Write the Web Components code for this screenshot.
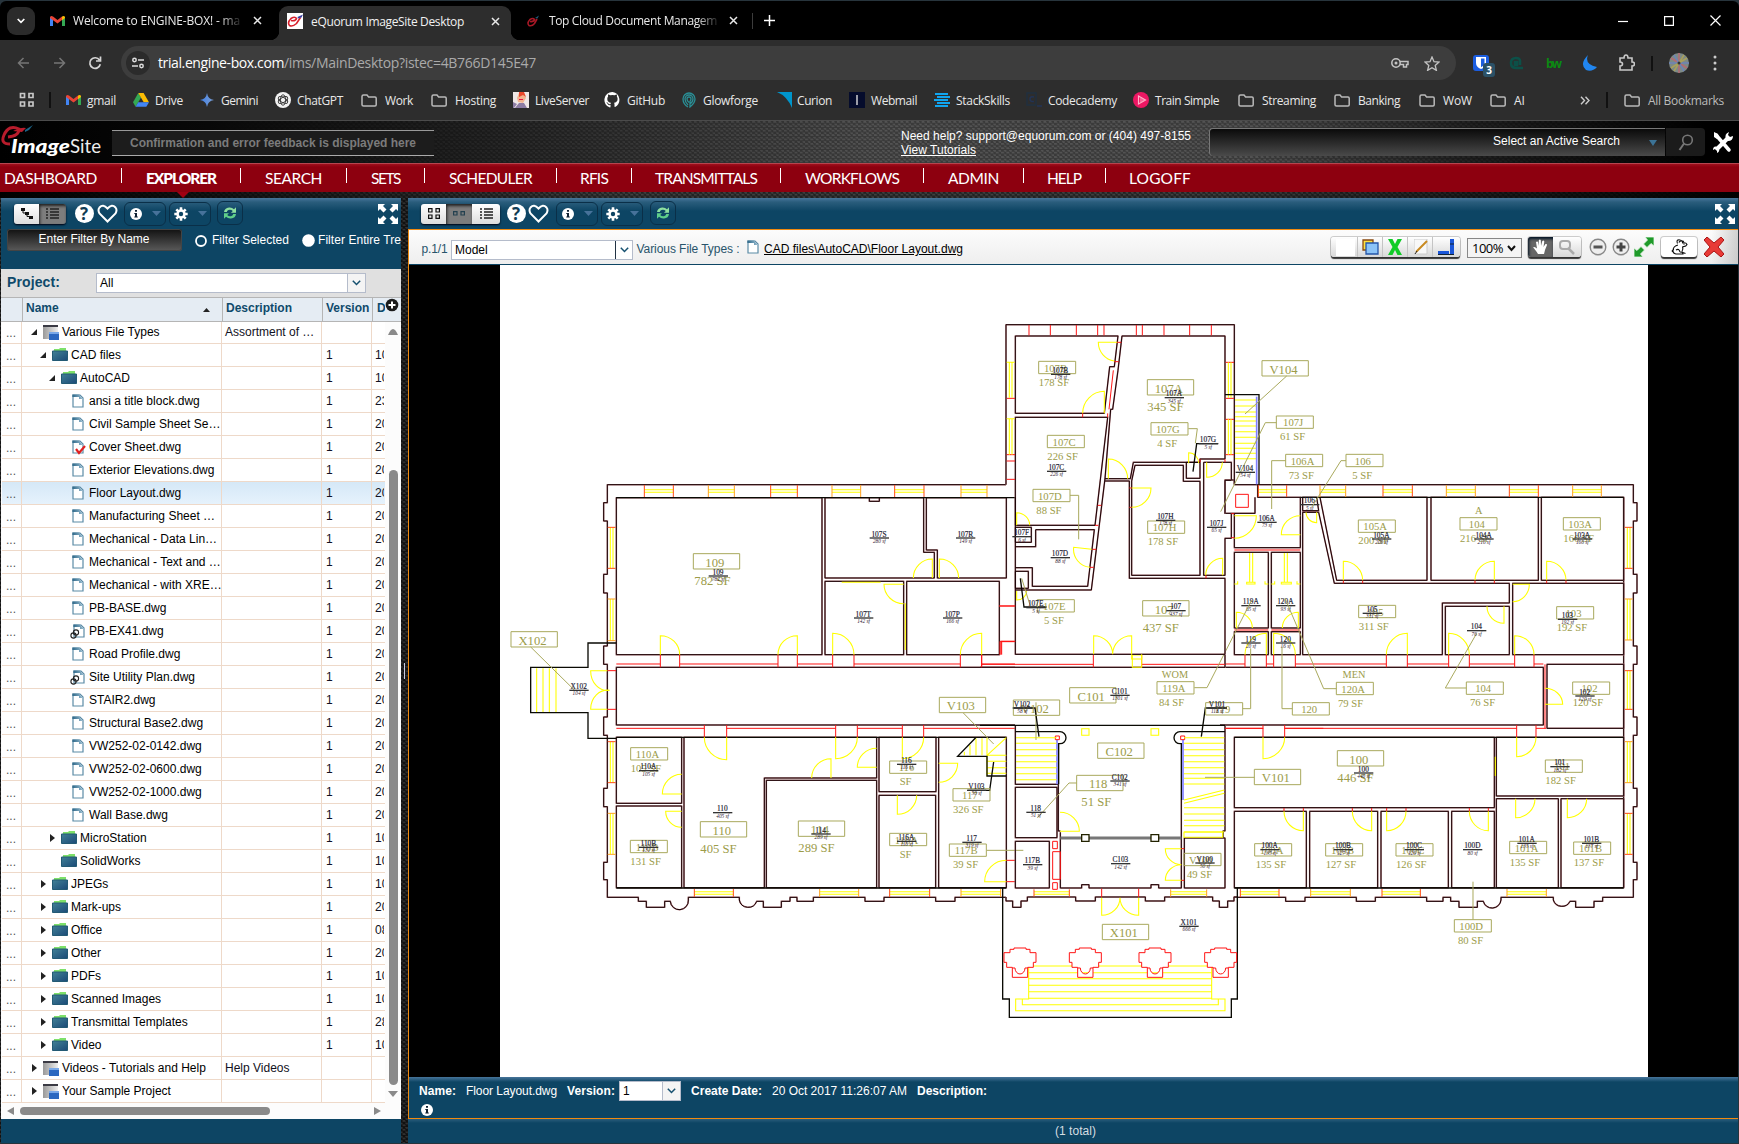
<!DOCTYPE html>
<html lang="en"><head><meta charset="utf-8"><title>eQuorum ImageSite Desktop</title>
<style>
html,body{margin:0;height:100%;background:#1d2b33;overflow:hidden}
body{font:12px "Liberation Sans",Arial,sans-serif}
</style></head><body>
<image-site-window></image-site-window>
<script>
/* Lays children out left to right; each item is [x, width, markup, extra style]. */
const row=(items,start=0)=>{let p=start;return items.map(([x,w,h,s=''])=>{const m=x-p;p=x+w;return `<div style="flex:none;display:flex;align-items:center;justify-content:center;margin-left:${m.toFixed(2)}px;width:${w}px;${s}">${h}</div>`}).join('')};
const fit=(x,w,t,s='')=>[x,w,`<fit-text w="${w}" style="${s}">${t}</fit-text>`];
const svg=(w,h,b,vb)=>`<svg width="${w}" height="${h}" viewBox="${vb||`0 0 ${w} ${h}`}" style="display:block;flex:none">${b}</svg>`;
const def=(n,f)=>customElements.define(n,class extends HTMLElement{connectedCallback(){if(this.shadowRoot)return;this.attachShadow({mode:'open'}).innerHTML=f(this)}});

/* Text tracked so that it fills the width it is given. */
customElements.define('fit-text',class extends HTMLElement{connectedCallback(){
 if(this.shadowRoot)return;
 this.attachShadow({mode:'open'}).innerHTML=`<style>:host{display:block;white-space:pre}span{display:inline-block;text-decoration:inherit}</style><span><slot></slot></span>`;
 const s=this.shadowRoot.querySelector('span'),w=+this.getAttribute('w'),n=this.textContent.length;
 this.style.width=w+'px';
 s.style.letterSpacing=((w-s.getBoundingClientRect().width)/n).toFixed(3)+'px';
}});

const I={
 gmail:svg(15,12,'<path d="M0 11V2h3v9zM3 5" fill="#4285f4"/><path d="M12 11V2h3v9z" fill="#34a853"/><path d="M0 2.500Q.5.300 3 1.500L7.500 5 12 1.500v3.600L7.500 8.600 0 3z" fill="#ea4335"/><path d="M12 1.500Q14.700.300 15 2.500V3l-3 2.300z" fill="#fbbc04"/>'),
 drive:svg(16,14,'<path d="M5.300 0 0 9.300 2.600 13.800 8 4.600z" fill="#34a853"/><path d="M5.300 0h5.300L16 9.300h-5.300z" fill="#fbbc04"/><path d="M5.200 9.300H16l-2.700 4.500H2.600z" fill="#4285f4"/>'),
 gemini:svg(14,14,'<defs><linearGradient id="g"><stop stop-color="#3f7fe8"/><stop offset="1" stop-color="#7c9ed0"/></linearGradient></defs><path d="M7 0Q7.800 6.200 14 7 7.800 7.800 7 14 6.200 7.800 0 7 6.200 6.200 7 0z" fill="url(#g)"/>'),
 gpt:svg(16,16,'<circle cx="8" cy="8" r="8" fill="#f2f2f2"/><g fill="none" stroke="#333" stroke-width=".9"><ellipse cx="8" cy="8" rx="2.500" ry="5.200"/><ellipse cx="8" cy="8" rx="2.500" ry="5.200" transform="rotate(60 8 8)"/><ellipse cx="8" cy="8" rx="2.500" ry="5.200" transform="rotate(120 8 8)"/></g>'),
 folder:svg(16,13,'<path d="M1 2.500Q1 1 2.500 1H6l1.600 2H14q1.200 0 1.200 1.200V10.800Q15.200 12 14 12H2.500Q1 12 1 10.800z" fill="none" stroke="#b9b9b9" stroke-width="1.500"/>'),
 live:svg(16,16,'<path d="M0 0h16v16H0z" fill="#efe7e6"/><path d="M6 1h5l2 5-3 5-5-1-1-4z" fill="#f2b38f"/><path d="M6 0h5l2 5-3-2-4 2z" fill="#e8482c"/><path d="M2 16l4-5h5l3 5zM0 10l4 2-3 4H0z" fill="#8d7da5"/><path d="M6 7h4v1H6z" fill="#e14"/>'),
 github:svg(17,16,'<path d="M8.500 0a8 8 0 0 0-2.600 15.600c.5.1.6-.2.600-.5v-2c-2.300.5-2.800-1-2.800-1-.4-1-1-1.300-1-1.300-.7-.5.1-.5.1-.5.800.1 1.300.9 1.300.9.800 1.300 2 1 2.500.700 0-.5.3-.9.500-1.100-1.900-.2-3.800-.9-3.800-4 0-.9.3-1.700.800-2.200 0-.2-.3-1.100.1-2.200 0 0 .700-.2 2.300.800a8 8 0 0 1 4 0c1.500-1 2.200-.8 2.200-.8.5 1.100.2 2 .1 2.200.5.600.8 1.300.8 2.200 0 3.100-1.900 3.800-3.700 4 .3.300.6.800.6 1.500v2.300c0 .2.1.5.600.4A8 8 0 0 0 8.500 0z" fill="#fff"/>'),
 glow:svg(14,16,'<g fill="none" stroke="#2a8f96" stroke-width="1.300"><path d="M6 15Q1 12 1 7a6 6 0 0 1 12 0Q13 11 8 15V9M8 12q3-2 3-5a4 4 0 0 0-8 0q0 3 3 6M7 10.500Q5 9 5 7a2 2 0 0 1 4 0q0 1.200-1 2"/></g>'),
 curion:svg(15,16,'<path d="M0 0h15v16Q10 4 0 0z" fill="#0095cc"/>'),
 web:svg(16,16,'<path d="M0 0h16v16H0z" fill="#050c2c"/><path d="M7.300 3h1.400v10H7.300z" fill="#ddd"/>'),
 stack:svg(16,14,'<path d="M1 0h13v2H1zM3 3h13v2H3zM0 6h14v2H0zM3 9h13v2H3zM1 12h13v2H1z" fill="#10a5ef"/>'),
 code:svg(17,16,'<path d="M1 1h9v12H1z" fill="none" stroke="#203040" stroke-width="1.400"/><path d="M8 5q-4-1-4 2t4 2.500M11 14h5" stroke="#235" stroke-width="1.500" fill="none"/>'),
 train:svg(16,16,'<circle cx="8" cy="8" r="8" fill="#ec1763"/><path d="M5.500 4v8l7-4z" fill="none" stroke="#ffb0c8" stroke-width="1.200"/><path d="M8 6v4M10 7v2" stroke="#ffb0c8"/>'),
 apps:svg(16,16,'<g fill="none" stroke="#c7c7c7" stroke-width="1.700"><path d="M1.500 1.500h4v4h-4zM10 1.500h4v4h-4zM1.500 10h4v4h-4zM10 10h4v4h-4z"/></g>'),
 x:svg(9,9,'<path d="M1 1l7 7M8 1 1 8" stroke="#e8e8e8" stroke-width="1.500"/>'),
 eq:(bg)=>svg(16,16,bg?'<path d="M0 0h16v16H0z" fill="#fff"/><path d="M4 7.500Q8.500 8.500 9.500 5.500 8 3 4 5.500 0 9.500 2.500 12.500q3 1.500 7-2L13.500 4.500" fill="none" stroke="#d8202c" stroke-width="1.600"/><path d="M10.500 4 16 1.500l-1.500 3-3.500 1z" fill="#3a3fa0"/>':'<path d="M5 8.500Q9 9 9.500 6.500 8 4.500 5 6.500 1.500 10 4 12.500q3 1 5.500-2L12 6" fill="none" stroke="#a81826" stroke-width="1.600"/><path d="M10 5l4-2.500-1.500 3z" fill="#1f5a7a"/>'),
 full:svg(20,20,'<path d="M0 0h7L5 2l3.500 3.500-3 3L2 5 0 7zM20 0h-7l2 2-3.500 3.500 3 3L18 5l2 2zM0 20h7l-2-2 3.500-3.500-3-3L2 15l-2-2zM20 20h-7l2-2-3.500-3.500 3-3L18 15l2-2z" fill="#fff"/>'),
 help:`<b style="display:block;width:19px;height:19px;border-radius:50%;background:#fff;color:#103c54;font:bold 17px/19px 'Open Sans';text-align:center">?</b>`,
 heart:svg(21,19,'<path d="M10.500 17.500 2.500 9.500Q.5 6 2.500 3.500 6-.5 10.500 4.500 15-.5 18.500 3.500q2 2.500 0 6z" fill="none" stroke="#fff" stroke-width="2"/>'),
 info:svg(12,12,'<circle cx="6" cy="6" r="6" fill="#fff"/><path d="M5 2h2v1.800H5zM4.300 5H7v3.600h.8v1H4.300v-1H5V6h-.7z" fill="#123"/>'),
 gear:svg(14,14,'<g stroke="#fff" stroke-width="2.600"><path d="M7 .3v13.400M.3 7h13.400M2.300 2.300l9.400 9.400M11.700 2.300l-9.400 9.400"/></g><circle cx="7" cy="7" r="4.700" fill="#fff"/><circle cx="7" cy="7" r="2.200" fill="#0d4564"/>'),
 down:svg(9,5,'<path d="M0 0h9L4.500 5z" fill="#47729a"/>'),
 refresh:svg(14,14,'<path d="M1 6Q1.500 2 6 1.500q3-.3 5 1.700l2-2v5.500H8L9.800 5Q8 3.300 5.500 4 4 4.600 3.800 6z" fill="#8ee0a0"/><path d="M13 8Q12.500 12 8 12.500q-3 .3-5-1.700l-2 2V7.300h5L4.200 9Q6 10.700 8.500 10 10 9.400 10.200 8z" fill="#5fcf8a"/>'),
 doc:svg(12,14,'<defs><linearGradient id="d" x2="1"><stop stop-color="#2d6788"/><stop offset="1" stop-color="#9cc0d4"/></linearGradient></defs><path d="M1 1h7l3 3v9H1z" fill="#fff" stroke="#5b8ba6" stroke-width="1.200"/><path d="M.4.400H7.500L8 3H.4zM7 1l4 4H7z" fill="url(#d)"/>'),
 chev:svg(9,6,'<path d="M.8.800 4.500 4.500 8.200.8" fill="none" stroke="#15506f" stroke-width="1.500"/>'),
 dir:svg(16,14,'<defs><linearGradient id="f" x2="1" y2="1"><stop stop-color="#418096"/><stop offset="1" stop-color="#1b4a77"/></linearGradient></defs><path d="M2 3V1h5l1-1h6v3z" fill="#7ee06a"/><path d="M.5 3h15v9.500h-15z" fill="url(#f)" stroke="#235a74"/>'),
 proj:svg(16,15,'<defs><linearGradient id="p" x2="1"><stop stop-color="#999"/><stop offset="1" stop-color="#eee"/></linearGradient></defs><path d="M0 0h15v14H0z" fill="url(#p)"/><path d="M0 0h15v2H0z" fill="#3a3a44"/><path d="M6 7h10v8H6z" fill="#2c68c0"/><path d="M6 7h10v2H6z" fill="#79a8e8"/>')
};

def('browser-tabs',()=>`<style>:host{display:flex;height:39px;background:#000;align-items:stretch;font:12px "Open Sans";color:#e8e8e8;border-radius:6px 6px 0 0}
.act{background:#2d2d2d;border-radius:9px 9px 0 0;height:34px;box-sizing:border-box;padding-bottom:4px;margin-top:5px;align-self:flex-start;justify-content:flex-start!important;position:relative}
.act:before,.act:after{content:"";position:absolute;bottom:0;width:9px;height:9px}.act:before{left:-9px;background:radial-gradient(circle at 0 0,#000 9px,#2d2d2d 9.500px)}.act:after{right:-9px;background:radial-gradient(circle at 100% 0,#000 9px,#2d2d2d 9.500px)}
.fade{-webkit-mask:linear-gradient(90deg,#000 88%,rgba(0,0,0,.15))}</style>
${row([[7,28,`<div style="width:28px;height:28px;border-radius:9px;background:#2b2b2b;display:flex;align-items:center;justify-content:center">${svg(8,6,'<path d="M.7 1 4 4.300 7.300 1" fill="none" stroke="#fff" stroke-width="1.700"/>')}</div>`],
[50,15,I.gmail],[73,167,'<fit-text class="fade" w="167">Welcome to ENGINE-BOX! - ma</fit-text>'],[252,10,I.x]])}
<div class="act" style="margin-left:17px;width:232px;display:flex;align-items:center">${row([[8,16,I.eq(1)],fit(32,153,'eQuorum ImageSite Desktop','color:#f1f1f1'),[211,10,I.x]])}</div>
${row([[525,16,I.eq(0)],[549,168,'<fit-text class="fade" w="168">Top Cloud Document Managem</fit-text>'],[728,10,I.x],[752,1,'<i style="width:1px;height:16px;background:#3c3c3c"></i>'],[763,12,svg(11,11,'<path d="M5.500 0v11M0 5.500h11" stroke="#fff" stroke-width="1.500"/>')],
[1617,12,svg(10,10,'<path d="M0 5.500h10" stroke="#fff" stroke-width="1.200"/>')],[1664,10,svg(10,10,'<path d="M.6.600h8.800v8.800H.6z" fill="none" stroke="#fff" stroke-width="1.200"/>')],[1710,11,svg(11,11,'<path d="M.5.500l10 10M10.500.500l-10 10" stroke="#fff" stroke-width="1.200"/>')]],511)}`);

def('browser-toolbar',()=>`<style>:host{display:flex;height:46px;background:#2d2d2d;align-items:center;font:14px "Open Sans";color:#aaa}
.pill{width:1335px;height:34px;border-radius:17px;background:#3d3d3d;display:flex;align-items:center}
.b{position:absolute;left:10px;top:8px;width:12px;height:14px;border-radius:3px;background:#2b5167;color:#fff;font:bold 10px/14px "Open Sans";text-align:center}</style>
${row([[17,13,svg(13,12,'<path d="M12 6H1.500M6.500 1 1.500 6l5 5" fill="none" stroke="#767676" stroke-width="1.500"/>')],[53,13,svg(13,12,'<path d="M1 6h10.500M6.500 1l5 5-5 5" fill="none" stroke="#767676" stroke-width="1.500"/>')],[88,14,svg(14,14,'<path d="M11.500 4A5.300 5.300 0 1 0 12.300 8.300M12.500.500v4.500H8" fill="none" stroke="#d5d5d5" stroke-width="1.700"/>')]])}
<div class="pill" style="margin-left:19px">${row([[5,24,`<div style="width:24px;height:24px;border-radius:12px;background:#2b2b2b;display:flex;align-items:center;justify-content:center">${svg(12,12,'<g fill="none" stroke="#ddd" stroke-width="1.500"><circle cx="2.500" cy="3" r="1.700"/><path d="M6 3h6M0 9h6"/><circle cx="9.500" cy="9" r="1.700"/></g>')}</div>`],fit(37,126,'trial.engine-box.com','color:#fff;margin-top:-2px'),fit(163,252,'/ims/MainDesktop?istec=4B766D145E47','margin-top:-2px'),
[1270,18,svg(18,12,'<g fill="none" stroke="#c4c4c4" stroke-width="1.500"><circle cx="5" cy="6" r="4.200"/><path d="M9 4.500h8v3h-1.500v2.500h-3V7.500H9"/></g><circle cx="5" cy="6" r="1.500" fill="#c4c4c4"/>')],[1303,16,svg(16,15,'<path d="M8 1l2 4.700 5 .4-3.800 3.300 1.200 5L8 11.700 3.600 14.400l1.200-5L1 6.100l5-.4z" fill="none" stroke="#c4c4c4" stroke-width="1.300"/>')]])}</div>
${row([[1474,16,`<div style="position:relative;width:16px;height:16px">${svg(16,16,'<rect width="16" height="16" rx="3" fill="#1b5de0"/><path d="M3 2h10v6q0 4-5 6-5-2-5-6z" fill="#fff"/><path d="M8 3.500h3.500V8Q11.500 10.500 8 12.300z" fill="#1b5de0"/>')}<div class="b">3</div></div>`],
[1509,16,svg(16,14,'<g fill="none" stroke="#0c5048" stroke-width="2.600"><path d="M12 9V5Q12 2 8 2 3 2 3 7t5 5q5 0 7 0M7 6h2v3H7z"/></g>')],fit(1547,14,'bw','color:#0b8a12;font-weight:bold;font-size:12px'),
[1583,15,svg(15,16,'<path d="M6 0Q2 9 15 12 10 17.500 4 15 -3 9 6 0z" fill="#2186f0"/>')],[1619,17,svg(17,18,'<path d="M2 4h4Q6 1 8 1t2 3h4v4q2.500 0 2.500 2T14 12v4H2v-4q2.500 0 2.500-2T2 8z" fill="none" stroke="#c9c9c9" stroke-width="1.600"/>')],[1652,2,'<i style="width:2px;height:15px;background:#111"></i>'],
[1670,20,svg(20,20,'<circle cx="10" cy="10" r="10" fill="#7e8a86"/><g stroke-width="1.500"><path d="M10 0v20M2 5l16 10" stroke="#b46a72"/><path d="M0 10h20M5 2l10 16" stroke="#6d84b8"/><path d="M15 2 5 18M18 5 2 15" stroke="#a9a05a"/></g><circle cx="10" cy="10" r="1.500" fill="#333"/>')],[1714,4,svg(4,16,'<g fill="#ccc"><circle cx="2" cy="2" r="1.500"/><circle cx="2" cy="8" r="1.500"/><circle cx="2" cy="14" r="1.500"/></g>')]],1457)}`);

const marks=[[66,15,'gmail',87,29,'gmail'],[133,16,'drive',155,28,'Drive'],[200,14,'gemini',221,37,'Gemini'],[275,16,'gpt',297,46,'ChatGPT'],[361,16,'folder',385,28,'Work'],[431,16,'folder',455,41,'Hosting'],[513,16,'live',535,54,'LiveServer'],[604,17,'github',627,38,'GitHub'],[682,14,'glow',703,55,'Glowforge'],[777,15,'curion',797,35,'Curion'],[849,16,'web',871,46,'Webmail'],[934,16,'stack',956,54,'StackSkills'],[1026,17,'code',1048,69,'Codecademy'],[1133,16,'train',1155,64,'Train Simple'],[1238,16,'folder',1262,54,'Streaming'],[1334,16,'folder',1358,42,'Banking'],[1419,16,'folder',1443,29,'WoW'],[1490,16,'folder',1514,11,'AI']];
def('bookmark-bar',()=>`<style>:host{display:flex;height:35px;box-sizing:border-box;padding-bottom:6px;background:#2d2d2d;align-items:center;font:12px "Open Sans";color:#e8e8e8;border-bottom:1px solid #4b4b4b}</style>
${row([[19,16,I.apps],[49,2,'<i style="width:2px;height:16px;background:#111"></i>'],...marks.flatMap(m=>[[m[0],m[1],I[m[2]]],fit(m[3],m[4],m[5])]),[1579,11,svg(10,9,'<path d="M1 .700 4.500 4.500 1 8.300M5.500.700 9 4.500 5.500 8.300" fill="none" stroke="#ccc" stroke-width="1.400"/>')],[1606,2,'<i style="width:2px;height:16px;background:#111"></i>'],[1624,16,I.folder],fit(1648,76,'All Bookmarks','color:#bbb')])}`);

const mesh='radial-gradient(ellipse 1.800px 1px at 1.500px 1px,rgba(255,255,255,.13) 90%,transparent),radial-gradient(ellipse 1.800px 1px at 4.200px 3.200px,rgba(255,255,255,.13) 90%,transparent)';
def('app-header',()=>`<style>:host{display:flex;height:42px;align-items:center;color:#fff;background:linear-gradient(90deg,#000 0,#080808 12%,rgba(0,0,0,.5) 30%,transparent 50%,transparent 72%,rgba(0,0,0,.6) 85%,#000 98%),${mesh},#3a3a3a;background-size:auto,5.300px 4.400px,5.300px 4.400px,auto}
.msg{height:24px;border-top:1px solid #999;border-bottom:1px solid #aaa;background:#1c1c1c;width:322px;display:flex;align-items:center}
.help{display:flex;flex-direction:column;line-height:14px;margin-top:2px}.f{height:28px;background:linear-gradient(#0a0a0a,#4a4a4a);border:1px solid #777;border-right:0;border-bottom:0;border-radius:4px 0 0 4px;box-sizing:border-box;display:flex;align-items:center}</style>
${row([[1,100,svg(100,40,'<path d="M7 15Q18 14 18 7 8 2 3 13-1 22 9 22" fill="none" stroke="#b81c2c" stroke-width="3"/><path d="M12 9Q19 5 25 6L21 10z" fill="#b81c2c"/><path d="M24 8l8-5-4 5-4 2z" fill="#1b6488"/><g font-family="Lato" fill="#fff" font-size="19"><text x="10" y="31" font-weight="900" font-style="italic" textLength="59" lengthAdjust="spacingAndGlyphs">Image</text><text x="69" y="31" fill="#eee" textLength="31" lengthAdjust="spacingAndGlyphs">Site</text></g>')],
[112,322,`<div class="msg" style="margin-top:2px">${row([fit(18,286,'Confirmation and error feedback is displayed here','color:#7b7b7b;font-weight:bold')])}</div>`],
[901,290,`<div class="help"><fit-text w="290">Need help? support@equorum.com or (404) 497-8155</fit-text><fit-text w="75" style="text-decoration:underline">View Tutorials</fit-text></div>`],
[1209,456,`<div class="f" style="width:456px">${row([fit(283,127,'Select an Active Search','margin-top:-4px'),[438,10,svg(8,6,'<path d="M0 0h8L4 6z" fill="#3c7396"/>')]])}</div>`],
[1666,39,`<div style="width:39px;height:28px;background:#1b1b1b;border-radius:0 4px 4px 0;display:flex;align-items:center;justify-content:center">${svg(16,17,'<circle cx="9.500" cy="6" r="4.800" fill="none" stroke="#777" stroke-width="1.600"/><path d="M6 9.500 1.500 16" stroke="#777" stroke-width="2"/>')}</div>`],
[1713,20,svg(20,21,'<path d="M3 3l13 15" stroke="#fff" stroke-width="3.500" stroke-linecap="round"/><path d="M3 18 15 6" stroke="#fff" stroke-width="4"/><path d="M13 7q-2-5 3-7l-1 3 2 2 3-1q0 5-5 5zM5 15q3 4-1 6l0-3-2-1-2 1q0-5 5-3z" fill="#fff"/><path d="M1 0l4 2 1 3-2 2-3-2z" fill="#fff"/>')]])}`);

const nav=[[4,93,'DASHBOARD'],[146,70,'EXPLORER'],[265,57,'SEARCH'],[371,29,'SETS'],[449,83,'SCHEDULER'],[580,28,'RFIS'],[655,102,'TRANSMITTALS'],[805,94,'WORKFLOWS'],[948,51,'ADMIN'],[1047,34,'HELP'],[1129,62,'LOGOFF']],seps=[121,240,346,424,556,631,780,923,1023,1105];
def('app-nav',()=>`<style>:host{display:block;height:35px;background:linear-gradient(90deg,#000,transparent 35%,transparent 70%,#000),${mesh},#222;background-size:auto,5.300px 4.400px,5.300px 4.400px,auto}
nav{height:29px;box-sizing:border-box;padding-bottom:1px;border-top:1px solid #b5454f;background:linear-gradient(#a0101d,#8d000f 3px);display:flex;align-items:center;color:#fff;font:15.500px Lato}i{width:1px;height:15px;background:#fff;margin-top:-4px}</style>
<nav>${row(nav.flatMap((n,k)=>[fit(n[0],n[1],n[2],k==1?'font-weight:900':''),...(seps[k]?[[seps[k],1,'<i></i>']]:[])]))}</nav><div style="display:flex">${row([[177,12,svg(12,6,'<path d="M0 0h12L6 6z" fill="#a00012"/>')]])}</div>`);

const btn=(w,h)=>`<div style="width:${w}px;height:24px;box-sizing:border-box;border:1.500px solid #0a2f48;border-radius:6px;display:flex;align-items:center;justify-content:center;gap:10px">${h}</div>`;
const drop=(i,w)=>btn(w,i+I.down);
const panelTop='linear-gradient(#47759a 0,#2a5d7c 4px,#0d4564 13px)';
const list=svg(13,11,'<path d="M4 1h9M4 4h9M4 7h9M4 10h9M0 1h2M0 4h2M0 7h2M0 10h2" stroke="#222" stroke-width="1.300"/>');
const seg=(parts)=>`<div style="display:flex;height:20px;border-radius:3px;overflow:hidden;box-shadow:0 1px 2px #001">${parts.map(([w,h,on])=>`<div style="width:${w}px;display:flex;align-items:center;justify-content:center;background:${on?'#7d7d7d;box-shadow:inset 1px 2px 3px #222':'linear-gradient(#fff,#ddd)'}">${h}</div>`).join('')}</div>`;

const rows=[[0,'v','p','Various File Types','','','Assortment of …'],[1,'v','f','CAD files',1,10],[2,'v','f','AutoCAD',1,10],...['ansi a title block.dwg|23','Civil Sample Sheet Se…|20','Cover Sheet.dwg|20|c','Exterior Elevations.dwg|20','Floor Layout.dwg|20','Manufacturing Sheet …|20','Mechanical - Data Lin…|20','Mechanical - Text and …|20','Mechanical - with XRE…|20','PB-BASE.dwg|20','PB-EX41.dwg|20|l','Road Profile.dwg|20','Site Utility Plan.dwg|20|l','STAIR2.dwg|20','Structural Base2.dwg|20','VW252-02-0142.dwg|20','VW252-02-0600.dwg|20','VW252-02-1000.dwg|20','Wall Base.dwg|20'].map(s=>{s=s.split('|');return [3,'',s[2]||'d',s[0],1,s[1]]}),[2,'>','f','MicroStation',1,10],[2,'','f','SolidWorks',1,10],...['JPEGs|10','Mark-ups|20','Office|08','Other|20','PDFs|10','Scanned Images|10','Transmittal Templates|28','Video|10'].map(s=>[1,'>','f',...s.split('|').flatMap((v,i)=>i?[1,v]:[v])]),[0,'>','p','Videos - Tutorials and Help','','','Help Videos'],[0,'>','p','Your Sample Project','','']];
def('tree-row',e=>{const r=rows[+e.getAttribute('n')],k=r[2],ic=k=='p'?I.proj:k=='f'?I.dir:k=='c'?svg(14,15,I.doc+'<path d="M4 9l3 4 6-7" fill="none" stroke="#e02020" stroke-width="2.200"/>'):k=='l'?svg(15,15,`<g transform="translate(3)">${I.doc}</g><g fill="none" stroke="#222" stroke-width="1.100"><circle cx="3.500" cy="11.500" r="2.600"/><circle cx="6" cy="8.500" r="2.600"/></g>`):I.doc;
const ar=r[1]=='v'?svg(6,6,'<path d="M6 0v6H0z" fill="#222"/>'):r[1]=='>'?svg(5,8,'<path d="M0 0v8l5-4z" fill="#222"/>'):'';
const L=r[0]==3?72:[43,52,61][r[0]];
return `<style>:host{display:flex;height:23px;box-sizing:border-box;border-bottom:1px solid #eed9c9;color:#000;background:${r[3].startsWith('Floor')?'linear-gradient(#d5e8f7,#e6f2fc)':'#fff'}}
div.c{box-sizing:border-box;border-right:1px solid #eed9c9;overflow:hidden;white-space:nowrap;line-height:22px;padding-left:4px;flex:none;color:#112}</style>
<div class="c" style="width:20px;line-height:24px;color:#555">...</div><div class="c" style="width:200px;display:flex;align-items:center;padding:0;color:#000">${row([[L-12,6,ar],k=='l'?[70,15,ic]:r[0]==3?[72,k=='c'?14:12,ic]:[L,16,ic]],22)}<span style="margin-left:${k=='l'?4:k=='c'?3:r[0]==3?5:3}px">${r[3]}</span></div>
<div class="c" style="width:100px;padding-left:3px">${r[6]||''}</div><div class="c" style="width:50px">${r[4]||''}</div><div class="c" style="width:12px;border-right:0;padding-left:3px">${r[5]||''}</div>`});

def('tree-panel',()=>`<style>:host{display:flex;flex-direction:column;width:400px;background:#0d4564;color:#fff;overflow:hidden}
.t{height:31px;background:${panelTop};display:flex;align-items:center;flex:none}.fl{height:40px;display:flex;align-items:flex-start;flex:none}
.in{width:175px;height:22px;border-radius:3px;background:linear-gradient(#111,#5a5a5a);box-shadow:0 0 0 1px #444 inset;text-align:center;line-height:21px}
.pr{height:28px;background:#e0e0e0;display:flex;align-items:center;color:#0f4a6b;flex:none}
.cb{border:1px solid #b5bccb;background:#fff;color:#000;display:flex;align-items:center;justify-content:space-between;padding-left:3px;box-sizing:border-box;height:20px}
.h{height:25px;display:flex;background:#e5ecf3;border-top:1px solid #b5b5b5;border-bottom:1px solid #b5b5b5;box-sizing:border-box;color:#0f4a6b;font-weight:bold;flex:none;padding-left:1px}
.h div{box-sizing:border-box;border-right:1px solid #b5b5b5;padding-left:4px;line-height:20px;flex:none}
.b{display:flex;height:781px;background:#fcfcfc;flex:none;padding-left:1px}.rows{width:383px;overflow:hidden;display:flex;flex-direction:column}.rows tree-row:first-child{margin-top:-1px}
.sb{width:16px;display:flex;flex-direction:column;align-items:center;flex:none}.hs{height:16px;background:#fcfcfc;display:flex;align-items:center;flex:none}</style>
<div class="t">${row([[14,52,seg([[25,svg(12,12,'<path d="M2 2v3h4v3.500h4" fill="none" stroke="#111"/><path d="M0 0h4v3H0zM4 4h4v3H4zM8 8h4v3H8z" fill="#111"/>')],[27,list,1]])],[74,20,I.help],[97,21,I.heart],[124,42,drop(I.info,42)],[169,42,drop(I.gear,42)],[217,26,btn(26,I.refresh),'margin-top:-1px'],[378,20,I.full]],1)}</div>
<div class="fl">${row([[6,176,'<div class="in"><fit-text w="111" style="display:inline-block">Enter Filter By Name</fit-text></div>'],[195,12,svg(12,12,'<circle cx="6" cy="6" r="5" fill="#0d4564" stroke="#fff" stroke-width="1.800"/>'),'height:23px'],[212,77,'<fit-text w="77">Filter Selected</fit-text>','height:22px'],[302,13,svg(13,13,'<circle cx="6.500" cy="6.500" r="6.300" fill="#fff"/>'),'height:23px'],[318,83,'<fit-text w="83">Filter Entire Tre</fit-text>','height:22px']],1)}</div>
<div class="pr">${row([[7,53,'<fit-text w="53" style="font:bold 14px Liberation Sans;margin-top:-3px">Project:</fit-text>'],[96,270,`<div class="cb" style="width:270px"><span>All</span><div style="width:17px;height:18px;border-left:1px solid #b5bccb;background:#f4f4f4;display:flex;align-items:center;justify-content:center">${I.chev}</div></div>`]],1)}</div>
<div class="h"><div style="width:21px"></div><div style="width:200px;display:flex;justify-content:space-between;padding:0 12px 0 3px"><span>Name</span>${svg(7,4,'<path d="M0 4h7L3.500 0z" fill="#222"/>').replace('display:block','display:block;margin-top:10px')}</div><div style="width:100px;padding-left:3px">Description</div><div style="width:50px;padding-left:3px">Version</div><div style="border:0;width:27px;display:flex;padding-left:4px"><span style="width:8px;overflow:hidden">D</span>${svg(14,14,'<circle cx="7" cy="7" r="6.300" fill="#1b1b1b"/><path d="M7 3.500v7M3.500 7h7" stroke="#fff" stroke-width="2"/>')}</div></div>
<div class="b"><div class="rows">${rows.map((_,i)=>`<tree-row n="${i}"></tree-row>`).join('')}</div><div class="sb">${svg(10,7,'<path d="M0 7Q5-5 10 7z" fill="#8a8a8a"/>').replace('display:block','display:block;margin-top:6px')}<i style="margin-top:135px;width:9px;height:615px;border-radius:5px;background:#8a8a8a;flex:none"></i>${svg(10,6,'<path d="M0 0h10L5 6z" fill="#8a8a8a"/>').replace('display:block','display:block;margin-top:6px')}</div></div>
<div class="hs">${row([[6,8,svg(7,8,'<path d="M7 0v8L0 4z" fill="#8a8a8a"/>')],[20,250,'<i style="width:250px;height:8px;border-radius:4px;background:#8a8a8a"></i>'],[373,8,svg(7,8,'<path d="M0 0v8l7-4z" fill="#8a8a8a"/>')]],1)}</div>`);

/* Floor plan: each quadrant is drawn in third-pixel units from its own origin. */
const P=(d,c,w=3,f='none')=>`<path d="${d}" fill="${f}" stroke="${c}" stroke-width="${w}"/>`;
const W=d=>P(d,'#b07a7e',4.600)+P(d,'#180003',3),K=d=>P(d,'#0a0a04',4),R=d=>P(d,'#ff1414'),Y=d=>P(d,'#ffff00',3.200),O=d=>P(d,'#a9a95c',3),BL=d=>P(d,'#8080ff',5),GR=d=>P(d,'#777',9);
const rc=a=>a.map(([x,y,X,Z])=>`M${x} ${y}H${X}V${Z}H${x}Z`).join('');
const D=a=>Y(a.map(([h,k,a1,b1,a2,b2])=>{const rx=Math.max(Math.abs(a1-h),Math.abs(a2-h)),ry=Math.max(Math.abs(b1-k),Math.abs(b2-k)),s=(a1-h)*(b2-k)-(b1-k)*(a2-h)>0?1:0;return `M${h} ${k}L${a1} ${b1}A${rx} ${ry} 0 0 ${s} ${a2} ${b2}`}).join(''));
const WH=(a,y,Z)=>a.map(([x,X],i)=>Y(`M${x} ${(y+Z)/2-4}H${X}M${x} ${(y+Z)/2+4}H${X}`)+P(`M${x} ${y}V${Z}M${X} ${y}V${Z}`,i%2?'#ffa020':'#ff4a14')).join('');
const WV=(a,x,X)=>a.map(([y,Z],i)=>Y(`M${(x+X)/2-4} ${y}V${Z}M${(x+X)/2+4} ${y}V${Z}`)+P(`M${x} ${y}H${X}M${x} ${Z}H${X}`,i%2?'#ffa020':'#ff4a14')).join('');
const tx=(x,y,t,s,a='start')=>`<text x="${x}" y="${y}" font-size="${s}" text-anchor="${a}" fill="#9c9c4a">${t}</text>`;
const lab=(w,h,s,d)=>a=>a.map(([x,y,t,sf,sx])=>O(`M${x} ${y}h${w}v${h}h${-w}z`)+tx(x+w/2-5,y+h-(s>35?7:6),t,s,'middle')+(sf?tx(sx||x,y+d,sf,s):'')).join('');
const BG=lab(139,46,38,93),SM=lab(111,37,32,73);
const MI=a=>a.map(([x,y,t,s])=>`<text x="${x-1}" y="${y-4}" font-size="22" text-anchor="middle" fill="#222233" stroke="#223" stroke-width=".5">${t}</text><text x="${x}" y="${y+15}" font-size="16" font-style="italic" text-anchor="middle" fill="#332233">${s}</text>`+P(`M${x-29} ${y}h58`,'#333',4)).join('');
const vs=(xs,y,Z)=>xs.map(x=>`M${x} ${y}V${Z}`).join(''),hs=(ys,x,X)=>ys.map(y=>`M${x} ${y}H${X}`).join(''),sg=(a,y)=>a.map(([x,X])=>`M${x} ${y}H${X}`).join('');
const sec=(x,y,h)=>`<g transform="translate(${x-500} ${y-265}) scale(.33333)">${h}</g>`;
const secB=[
 W('M1518 44H322V98H311V153H322V313H311V369H322V528H311V583H322V741H311V796H322V955H311V1010H322V1177H311V1229H322V1282H415V1294H439V1312H494V1294H511A27 27 0 0 0 565 1290V1282H718V1290A27 27 0 0 0 770 1294H790V1312H844V1294H870V1282H891V1294H940V1282H1095V1294H1152V1282H1307V1294H1365V1282H1518'),
 W(rc([[349,83,966,554],[975,334,1211,554],[1220,334,1498,554],[349,802,545,1000],[349,1008,545,1253],[799,931,1130,1253],[1137,802,1308,965],[1137,976,1307,1253],[1316,802,1519,1253]])+'M975 83H1271V247H1303V324H975ZM1108 83V94H1138V83M1279 83H1519V324H1312V240H1279ZM1545 592H349V765H1545M552 802H1130V924H793V1253H552Z'),
 K('M349 519H264V592H92V728H264V805H349'),K('M349 802H1519M349 83H1545M349 1254H1519'),
 R(sg([[349,481],[539,834],[892,998],[1062,1381],[1445,1545]],582)+sg([[349,613],[680,1007],[1072,1207],[1271,1545]],775)+vs([481,539,834,892,998,1062,1381,1445],554,592)+vs([613,680,1007,1072,1207,1271],765,802)+'M1498 408H1545M1545 515H1505V554M1519 1171H1545M1519 1235H1545M322 602H348M322 718H348'),
 WH([[433,520],[625,703],[812,892],[996,1082],[1184,1272],[1383,1461]],45,81),WV([[172,295],[387,512],[815,938],[1030,1153]],323,347),WH([[583,700],[959,1076],[1169,1289],[1383,1502]],1257,1281),
 D([[481,554,481,497,539,554],[892,554,892,497,834,554],[998,554,998,490,1062,554],[1445,554,1445,490,1381,554],[1297,324,1297,267,1240,324],[1318,324,1318,267,1376,324],[1211,343,1152,343,1211,401],[680,802,680,869,613,802],[1007,802,1007,866,1072,802],[1207,802,1207,866,1271,802],[1130,892,1072,892,1130,835],[993,924,993,866,935,924],[545,972,487,972,545,913],[545,1024,497,1024,545,1072],[1316,880,1373,880,1316,937],[1192,976,1192,1033,1250,976],[1519,1235,1454,1235,1519,1171],[322,602,272,602,329,661],[322,718,272,718,329,661]]),
 Y(vs([110,129,148,168],595,726)+'M1025 337H1142M1216 400V540M1393 845V856M1410 825V856M1428 805V856M1446 805V856M1461 803V918M1461 856L1519 803'+hs([856,874,893,910],1461,1519)),
 K('M1427 803L1373 859H1461V918H1519M1481 876L1469 961H1403'),O('M92 531L224 661M1390 729L1481 822M1460 1141H1570'),
 BG([[580,251,109,'782 SF',583],[33,485,'X102'],[1318,682,'V103'],[601,1055,110,'405 SF'],[895,1053,114,'289 SF']]),SM([[392,833,'110A','105 SF'],[391,1111,'110B','131 SF'],[1169,873,116,'SF',1199],[1169,1090,'116A','SF',1199],[1359,956,117,'326 SF'],[1348,1122,'117B','39 SF',1359]]),
 MI([[655,318,109,'782 sf'],[1138,204,'107S','280 sf'],[1397,204,'107R','149 sf'],[1091,444,'107T','142 sf'],[1358,444,'107P','166 sf'],[237,661,'X102','104 sf'],[446,902,'110A','105 sf'],[446,1132,'110B','131 sf'],[668,1028,110,'405 sf'],[963,1092,114,'289 sf'],[1220,883,116,'116 sf'],[1220,1114,'116A','116 sf'],[1430,961,'V103','50 sf'],[1416,1117,117,'319 sf']])].join('');
const secA=[
 W('M138 524V44H823V523M166 78H474L463 170H449L433 310H166ZM795 447V78H486L474 181L458 298H452L435 506H511L520 457H720V447H795M166 322H443L405 646H166ZM435 506L394 840H166V1033H795V805H508V513H435M227 659H403L383 829H217V773H166M166 710H227V659M515 513L525 466H670V514H720V796H515V513M731 457V796H795V685H814V611M795 611V511H814V457H731'+rc([[166,652,214,697],[166,784,205,835],[679,457,720,505]])+'M166 562V840'),
 R(vs([207,271,349,413,432,529,547,612,689,754],45,76)+hs([265,434,453,508],140,165)+hs([157,265,328,434],797,822)+'M118 888H166M166 994H123V1033M460 181L447 298M368 310V322M443 310V322M470 97H484M463 155H476M405 646H415M398 718H409M390 772H401M413 586H424M720 447V457M795 447V457M738 796V805M508 534H515M508 592H515M814 611H823M814 683H823'),
 Y('M148 157V263M156 157V263M148 326V434M156 326V434M805 157V263M813 157V263M805 326V434M813 326V434M140 157H164M140 326H164'+hs([270,288,306,320,333,348,365,382,400,415,430,446],825,888)+'M515 1033V1047H545V1033'),
 BL('M890 260V523'),K('M795 254H897V523'),
 D([[472,97,415,97,463,153],[433,310,433,244,368,310],[445,506,445,447,503,506],[515,534,573,534,515,592],[686,460,686,428,716,460],[740,457,740,502,787,457],[788,796,788,745,737,796],[170,646,170,608,209,646],[395,718,341,712,390,772],[170,843,170,870,200,843],[401,1033,401,977,458,1033],[515,1033,515,977,458,1033]]),
 O('M980 198L855 312M949 338H916L782 605M977 452H935V597M1158 452H1143L1055 592M685 356H712L706 400M330 556H356V688M185 805L210 885'),K('M775 401H710L699 485M181 805L192 891H260'),
 BG([[562,209,'107A','345 SF'],[548,872,107,'437 SF'],[906,152,'V104']]),SM([[236,154,'107B','178 SF'],[573,338,'107G','4 SF',592],[262,376,'107C','226 SF'],[219,538,'107D','88 SF',229],[563,633,'107H','178 SF'],[232,869,'107E','5 SF',252],[949,318,'107J','61 SF',960],[977,433,'106A','73 SF',986],[1158,433,106,'5 SF',1177]]),
 MI([[302,193,'107B','178 sf'],[643,263,'107A','345 sf'],[745,401,'107G','5 sf'],[290,484,'107C','226 sf'],[617,631,'107H','178 sf'],[770,652,'107J','65 sf'],[856,487,'V104','54 sf'],[186,680,'107F','6 sf'],[301,743,'107D','88 sf'],[228,893,'107E','5 sf'],[648,902,107,'437 sf']])].join('');
const col=c=>`M${c-30} 928H${c-18}V924H${c+18}V928H${c+30}V938H${c+48}V967H${c+40}V982H${c+23}V1012H${c-23}V982H${c-40}V967H${c-48}V938H${c-30}ZM${c-23} 984H${c-15}A15 18 0 0 0 ${c+15} 984H${c+23}`;
const secC=[
 W('M0 82H735V45M106 256V433H235M106 744H208V604H106ZM106 593H231V442H106ZM735 256V573H729V593M613 594H735V744H613ZM241 577V744H305V734H327V744H513V734H536V744H604V480M235 433V573H241M78 771V783H98V802H123V783H142V771H287V783H346V771H496V783H554V771H698V783H718V802H743V783H762V771H772'),
 K('M0 256H735M106 275H240A18 18 0 0 1 240 311H236V433M735 275H600A18 18 0 0 0 600 311H604V480'),GR('M241 594H604'),
 P(rc([[305,584,327,604],[513,584,536,604]]),'#222200',4,'#fff'),BL('M231 300V433M609 300V480'),
 R(sg([[5,340],[485,735]],73)+vs([5,340,485],45,82)+'M60 45V4H106'+sg([[735,850],[914,1030]],265)+'M365 746V771M476 746V771M604 626H613M604 721H613'+rc([[226,288,238,299],[602,288,614,299],[218,604,232,626],[218,635,241,718],[218,728,232,748]])),
 Y(rc([[305,266,327,286],[513,266,536,286],[457,45,485,82],[612,577,728,592]])+hs([293,310,329,347,365,383,401,419],108,230)+hs([293,310,329,347,365,383,401,415,432,503,522,541,557,575],612,733)+'M612 480L733 450M612 490L733 460M146 978V1077H107V1112H735V1077H695V978M127 1077V1094H715V1077'+hs([978,998,1016,1036,1055,1075],146,695)),
 WH([[162,268],[572,680]],748,770),K('M68 744V1077H88V1132H754V1077H772V744'),
 P([120,316,525,722].map(col).join(''),'#ff1414',3,'#fff'),
 D([[365,773,365,826,420,773],[476,773,476,826,420,773],[604,626,556,626,604,674],[604,721,556,721,604,674],[240,574,298,574,240,517]]),
 O('M643 143H681L815 -120M788 206H812V25M937 206H906V20M1069 146H1031L915 -125M290 429H267L172 534M823 412H675M168 300V187'),K('M100 204H165L177 290M741 204H676L664 290'),
 BG([[269,143,'C101'],[100,180,'V102'],[353,309,'C102'],[290,406,118,'51 SF',304],[823,388,'V101'],[367,853,'X101']]),SM([[531,125,'119A','84 SF',537],[677,188,119],[937,188,120],[1069,127,'120A','79 SF',1074],[612,640,'V100','49 SF',621]]),tx(585,113,'WOM',31,'middle'),tx(1122,113,'MEN',31,'middle'),
 MI([[127,204,'V102','58 sf'],[420,166,'C101','1301 sf'],[712,204,'V101','118 sf'],[420,423,'C102','341 sf'],[168,517,118,'51 sf'],[158,674,'117B','39 sf'],[422,671,'C103','142 sf'],[675,669,'V100','50 sf'],[627,859,'X101','666 sf']])].join('');
const secD=[
 W('M43 44H1240V98H1251V153H1240V313H1251V369H1240V528H1251V583H1240V741H1251V796H1240V955H1251V1010H1240V1177H1251V1229H1240V1282H1148V1294H1122V1312H1067V1294H1050A27 27 0 0 1 1000 1290V1282H843V1290A27 27 0 0 1 790 1294H772V1312H717V1294H692V1282H669V1294H620V1282H466V1294H409V1282H255V1294H197V1282H43M43 44V30H15V130H105V82M113 44V82H241V233H43V130M248 82V122H296L290 82ZM248 127H296L343 340H868V399H667V554H248ZM300 82H621V331H350ZM15 592H970V765H0M1211 82V1253'),
 W(rc([[633,82,955,331],[964,82,1211,331],[878,340,1211,554],[676,409,868,554],[43,247,145,474],[154,247,241,474],[43,485,145,554],[154,485,241,554],[981,583,1211,775],[43,802,823,1013],[829,802,1211,978],[43,1024,259,1253],[269,1024,473,1253],[483,1024,685,1253],[695,1024,823,1253],[829,986,1015,1253],[1023,986,1211,1253]])),
 K('M241 82H1211M43 802H1211M43 1254H1211'),
 R(sg([[15,75],[139,161],[226,499],[562,686],[748,884],[942,970]],582)+sg([[15,129],[194,890],[948,978]],775)+vs([75,139,161,226,499,562,686,748,884,942],554,592)+vs([129,194,890,948],765,802)+vs([975],583,775)+vs([192,250,397,455,500,558,748,805],1014,1023)+vs([370,428,765,823,980,1038],332,340)+'M47 73H85V112H47ZM43 240H241M43 480H145M154 480H241'),
 WH([[115,200],[300,377],[489,577],[679,766],[868,955],[1058,1144]],45,81),WV([[172,295],[387,510],[602,718],[815,938],[1030,1153]],1214,1238),WH([[61,177],[272,391],[486,601],[861,979]],1257,1281),
 D([[43,137,109,137,43,205],[241,194,184,194,241,137],[370,331,370,274,428,331],[823,331,823,274,765,331],[980,331,980,274,1038,331],[878,343,928,343,878,395],[852,409,852,460,801,409],[686,554,686,490,748,554],[562,554,562,490,499,554],[884,554,884,497,942,554],[290,127,290,158,258,127],[49,474,49,427,97,474],[235,474,235,427,187,474],[139,554,139,490,75,554],[161,554,161,490,226,554],[129,802,129,866,194,802],[890,802,890,860,948,802],[975,703,1028,703,975,655],[250,1024,250,1082,192,1024],[455,1024,455,1082,397,1024],[500,1024,500,1082,558,1024],[805,1024,805,1082,748,1024],[887,986,887,1043,945,986],[1042,986,1042,1043,1100,986]]),
 Y('M89 249V338M98 249V338M43 342h10v-8M80 342h25v-5h-25zM145 342h-10v-8M193 249V338M202 249V338M154 342h10v-8M184 342h30v-5h-30zM241 342h-10v-8M826 860V918'),
 O('M759 1349V1235M739 654H676L770 490'),
 BG([[352,842,100,'446 SF']]),SM([[415,150,'105A','200 SF'],[416,406,105,'311 SF'],[720,143,104,'216 SF'],[1030,143,'103A','166 SF'],[1010,410,103,'192 SF'],[739,636,104,'76 SF',750],[1058,636,102,'120 SF'],[976,870,101,'182 SF'],[104,1121,'100A','135 SF',107],[317,1121,'100B','127 SF'],[528,1121,'100C','126 SF'],[869,1114,'101A','135 SF'],[1061,1116,'101B','137 SF'],[703,1349,'100D','80 SF',714]]),tx(776,132,'A',31,'middle'),
 MI([[485,207,'105A','200 sf'],[792,207,'104A','216 sf'],[1087,207,'103A','166 sf'],[457,430,105,'311 sf'],[1043,448,103,'192 sf'],[770,482,104,'76 sf'],[1095,678,102,'120 sf'],[431,909,100,'446 sf'],[1020,890,101,'182 sf'],[150,1139,'100A','135 sf'],[370,1139,'100B','127 sf'],[583,1139,'100C','126 sf'],[758,1139,'100D','80 sf'],[921,1120,'101A','135 sf'],[1115,1120,'101B','137 sf'],[141,157,'106A','73 sf'],[93,407,'119A','85 sf'],[197,407,'120A','93 sf'],[93,519,119,'20 sf'],[197,519,120,'16 sf'],[269,104,106,'5 sf']])].join('');
def('floor-plan',()=>`<style>:host{display:block;background:#fff;width:1148px;height:812px}svg{font-family:"Liberation Serif",serif}</style>${svg(1148,812,sec(500,470,secB)+sec(1220,470,secD)+sec(980,640,secC)+sec(960,310,secA))}`);

const rd=(c)=>svg(18,18,`<circle cx="9" cy="9" r="7.800" fill="#eee" stroke="#888" stroke-width="1.400"/>${c}`);
def('viewer-panel',()=>`<style>:host{display:flex;flex-direction:column;width:1330px;background:#0d4564;color:#fff}
.t{height:31px;background:${panelTop};display:flex;align-items:center;flex:none}
.o{border:1px solid #f08a10;border-right:0;height:890px;box-sizing:border-box;display:flex;flex-direction:column;flex:none}
.v{height:35px;box-sizing:border-box;border-bottom:1px solid #0d4564;background:linear-gradient(90deg,transparent 98%,#aaa8),linear-gradient(#fcfcfc,#eee);color:#28546b;display:flex;align-items:center;flex:none}
.cb{width:182px;height:20px;border:1px solid #b5bccb;background:#fff;color:#000;display:flex;align-items:center;justify-content:space-between;padding-left:3px;box-sizing:border-box}
.st{background:#000;height:812px;display:flex;flex:none;padding-left:91px}
.n{display:flex;height:28px;align-items:center;background:linear-gradient(#47759a,#0d4564 5px)}
.g{display:flex;height:20px;border-radius:3px;background:linear-gradient(#fff,#d8d8d8);box-shadow:0 2px 1px #333,0 0 0 1px #ccc;align-items:center;overflow:hidden}
.g u{width:1px;height:20px;background:#c4c4c4;display:block}</style>
<div class="t">${row([[421,79,seg([[25,svg(12,11,'<g fill="none" stroke="#111" stroke-width="1.200"><path d="M.6.600h3.400v3.400H.6zM8 .600h3.400v3.400H8zM.6 7h3.400v3.400H.6zM8 7h3.400v3.400H8z"/></g>')],[26,svg(12,5,'<g fill="none" stroke="#23404f" stroke-width="1.200"><path d="M.6.600h3.400v3.400H.6zM8 .600h3.400v3.400H8z"/></g>'),1],[28,list]])],[506,20,I.help],[528,21,I.heart],[556,42,drop(I.info,42)],[601,42,drop(I.gear,42)],[650,26,btn(26,I.refresh),'margin-top:-1px'],[1715,20,I.full]],408)}</div>
<div class="o"><div class="v">${row([[421,27,'<fit-text w="26" style="margin-top:4px">p.1/1</fit-text>'],[451,182,`<div class="cb" style="margin-top:6px"><span>Model</span><div style="width:16px;height:18px;border-left:1px solid #234;display:flex;align-items:center;justify-content:center">${I.chev}</div></div>`],[636,104,'<fit-text w="103" style="margin-top:4px">Various File Types :</fit-text>'],[747,12,I.doc],[764,199,'<fit-text w="199" style="margin-top:4px;color:#000;text-decoration:underline">CAD files\\AutoCAD\\Floor Layout.dwg</fit-text>'],
[1331,129,`<div class="g" style="width:129px">${row([[4,20,'<i style="width:19px;height:17px;background:#fff"></i>'],[26,1,'<u></u>'],[31,17,svg(17,16,'<path d="M1 1h10v10H1z" fill="#ffe040" stroke="#8a4a10" stroke-width="1.300"/><path d="M4 4h12v11H4z" fill="#8cc4f8" stroke="#2455a8" stroke-width="1.300"/>')],[51,1,'<u></u>'],[56,15,svg(14,16,'<path d="M0 0h4.500l2.500 5 2.500-5H14L9.500 8l4.500 8H9.500L7 11l-2.500 5H0l4.500-8z" fill="#10cc28"/>')],[76,1,'<u></u>'],[82,17,svg(16,16,'<path d="M0 0h13v15H0z" fill="#f8f8f8" stroke="#ccc"/><path d="M2 13 13 2" stroke="#c88a20" stroke-width="2"/><path d="M1 15l2-3" stroke="#222"/>')],[101,1,'<u></u>'],[107,17,svg(17,17,'<path d="M0 12h11v4H0zM12 0h4v16h-4z" fill="#1a56d8"/><path d="M0 15.500h16M12 5h4" stroke="#123"/>')]])}</div>`,'height:34px'],
[1467,55,`<div style="width:55px;height:20px;border:1px solid #888;box-sizing:border-box;background:#f4f4f4;color:#000;font:13px Open Sans;display:flex;align-items:center;gap:4px;padding-left:4px"><fit-text w="31">100%</fit-text>${svg(9,7,'<path d="M1 1l3.500 4L8 1" fill="none" stroke="#111" stroke-width="2"/>')}</div>`,'margin-top:2px'],
[1528,53,`<div class="g" style="width:53px"><div style="width:25px;height:20px;background:#666;box-shadow:inset 1px 2px 3px #012;display:flex;align-items:center;justify-content:center">${svg(15,16,'<path d="M5 15Q2 10 0 8.500 1.500 7 4 9.500L3 3q1.300-1.200 2 0l.8 4V1.200q1.200-1.200 2 0L8 7l1.300-5q1.500-1 2 .5L10.500 8l2-3q1.600-.5 1.500 1L12 11l-1 4z" fill="#fff"/>')}</div>${svg(28,20,'<rect x="7" y="4" width="10" height="8" rx="3" fill="none" stroke="#aaa" stroke-width="2"/><path d="M15 11l6 6" stroke="#aaa" stroke-width="2.500"/>')}</div>`],
[1589,18,rd('<path d="M4.500 9h9" stroke="#555" stroke-width="3"/>')],[1612,18,rd('<path d="M4.500 9h9M9 4.500v9" stroke="#444" stroke-width="3"/>')],[1634,20,svg(20,20,'<path d="M20 0v9l-3-2.500-4 4-3.500-3.500 4-4L11 0zM0 20v-9l3 2.500 4-4 3.500 3.500-4 4L9 20z" fill="#1f9a2a" stroke="#e8f5e8" stroke-width=".8"/>')],
[1661,36,`<div class="g" style="width:36px;background:#fff;justify-content:center">${svg(17,16,'<g fill="none" stroke="#111" stroke-width="1.100"><path d="M6.500 4.500Q5 .8 8 .800q2.500.200 4 2.700M8 3.500Q9 .8 13 2.500M11 4q4-1 5 1.500-1 2.500-4.500 2M11.500 7.500q1 3-.5 5M7 6Q2.500 7 2 11q-.3 3.500 3 4h7q0-2-3-2M3 10.500Q.5 11 1.500 13M5 11q3-2 4 2M10.500 13l4 1.500"/></g><circle cx="13" cy="5" r=".7" fill="#111"/>')}</div>`],[1704,20,svg(20,20,'<path d="M3 0l7 6 7-6 3 3-6 7 6 7-3 3-7-6-7 6-3-3 6-7-6-7z" fill="#e83a36" stroke="#a81414"/>')]],409)}</div>
<div class="st"><floor-plan></floor-plan></div>
<div class="n">${row([fit(419,37,'Name:','font-weight:bold'),fit(466,91,'Floor Layout.dwg'),fit(567,48,'Version:','font-weight:bold'),[619,62,`<div class="cb" style="width:62px"><span>1</span><div style="width:17px;height:18px;border-left:1px solid #b5bccb;background:#f4f4f4;display:flex;align-items:center;justify-content:center">${I.chev}</div></div>`],fit(691,71,'Create Date:','font-weight:bold'),fit(772,135,'20 Oct 2017 11:26:07 AM'),fit(917,70,'Description:','font-weight:bold')],409)}</div><div style="display:flex;height:12px;align-items:center;margin-top:-1px">${row([[421,12,I.info]],409)}</div></div>
<div style="display:flex;height:24px;align-items:center;background:linear-gradient(#2a5d7c,#0d4564 4px)">${row([fit(1055,41,'(1 total)','color:#d5dde2;margin-top:-1px')],408)}</div>`);

def('image-site-window',()=>`<style>:host{display:flex;flex-direction:column;width:1739px;height:1144px;box-sizing:border-box;padding-top:1px;background:#27343c}
main{display:flex;flex:none;height:945px;padding-left:1px;background:${mesh},#111;background-size:5.300px 4.400px,5.300px 4.400px,auto;width:1737px}
.d{width:7px;display:flex;align-items:center;justify-content:center}</style>
<browser-tabs></browser-tabs><browser-toolbar></browser-toolbar><bookmark-bar></bookmark-bar><app-header></app-header><app-nav></app-nav>
<main><tree-panel></tree-panel><div class="d"><i style="width:1px;height:16px;background:#ccd"></i></div><viewer-panel></viewer-panel></main>`);
</script></body></html>
